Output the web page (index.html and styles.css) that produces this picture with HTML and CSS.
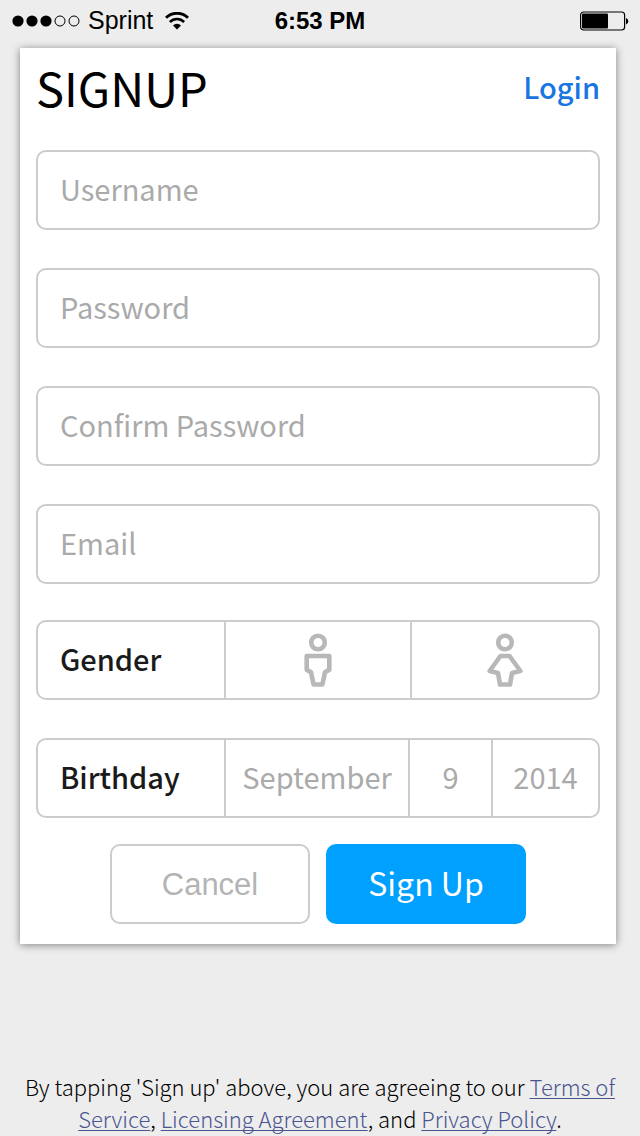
FILE: index.html
```html
<!DOCTYPE html>
<html lang="en">
<head>
  <meta charset="UTF-8">
  <meta name="viewport" content="width=device-width, initial-scale=1.0">
  <title>Signup</title>
  <link rel="stylesheet" href="styles.css">
</head>
<body>

<!-- Status bar -->
<div class="status-bar">
  <div class="carrier">
    <svg class="signal" width="68" height="12" viewBox="0 0 68 12">
      <circle cx="6" cy="6" r="5.6"/>
      <circle cx="20" cy="6" r="5.6"/>
      <circle cx="34" cy="6" r="5.6"/>
      <circle cx="48" cy="6" r="5" fill="none" stroke="#000"/>
      <circle cx="62" cy="6" r="5" fill="none" stroke="#000"/>
    </svg>
    <span>Sprint</span>
    <svg class="wifi" width="24" height="18" viewBox="0 0 24 18">
      <path d="M1 5.8a15.6 15.6 0 0 1 22 0" fill="none" stroke="#000" stroke-width="2.8"/>
      <path d="M4.9 10a10 10 0 0 1 14.2 0" fill="none" stroke="#000" stroke-width="2.6"/>
      <path d="M8 13.4a5.6 5.6 0 0 1 8 0L12 17.6z"/>
    </svg>
  </div>
  <div class="clock">6:53 PM</div>
  <svg class="battery" width="50" height="20" viewBox="0 0 50 20">
    <rect x="0.6" y="1" width="44" height="18" rx="3" fill="none" stroke="#000" stroke-width="1.2"/>
    <rect x="2" y="2.6" width="26" height="14.8" rx="1"/>
    <path d="M46 7a3 3.4 0 0 1 0 6.6z"/>
  </svg>
</div>

<form class="card">
  <div class="card-header">
    <h1>SIGNUP</h1>
    <a href="#login">Login</a>
  </div>

  <div class="fields">
    <input class="field" type="text" placeholder="Username" aria-label="Username">
    <input class="field" type="password" placeholder="Password" aria-label="Password">
    <input class="field" type="password" placeholder="Confirm Password" aria-label="Confirm Password">
    <input class="field" type="email" placeholder="Email" aria-label="Email">
  </div>

  <div class="options">
    <div class="row gender" role="radiogroup" aria-labelledby="genderLabel">
      <span class="row-label" id="genderLabel">Gender</span>
      <label class="cell">
        <input type="radio" name="gender" value="male" aria-label="Male">
        <svg width="36" height="54" viewBox="0 0 36 54">
          <circle cx="18" cy="9.5" r="6.8"/>
          <path d="M6.7 23h22.6v13.7l-4.3 2.6-2.6 12.2h-8.8L11 39.3l-4.3-2.6z"/>
        </svg>
      </label>
      <label class="cell">
        <input type="radio" name="gender" value="female" aria-label="Female">
        <svg width="36" height="54" viewBox="0 0 36 54">
          <circle cx="18" cy="9.5" r="6.8"/>
          <path d="M13.5 23h9L33.4 38l-8.4 2-2 11.5H13L11 40l-8.4-2z"/>
        </svg>
      </label>
    </div>

    <div class="row birthday" role="group" aria-labelledby="birthdayLabel">
      <span class="row-label" id="birthdayLabel">Birthday</span>
      <select class="cell" aria-label="Month"><option>September</option></select>
      <select class="cell" aria-label="Day"><option>9</option></select>
      <select class="cell" aria-label="Year"><option>2014</option></select>
    </div>
  </div>

  <div class="actions">
    <button class="btn btn-cancel" type="button">Cancel</button>
    <button class="btn btn-signup" type="submit">Sign Up</button>
  </div>
</form>

<p class="terms">
  By tapping 'Sign up' above, you are agreeing to our <a href="#terms">Terms of Service</a>, <a href="#license">Licensing Agreement</a>, and <a href="#privacy">Privacy Policy</a>.
</p>

</body>
</html>
```
FILE: styles.css
```css
* {
  box-sizing: border-box;
}
body {
  margin: 0;
  background: #ededed;
  font-family: "Noto Sans CJK SC", "Open Sans", sans-serif;
  font-size: 29px;
  color: #000;
}

/* status bar */
.status-bar {
  display: grid;
  grid-template-columns: 1fr auto 1fr;
  align-items: center;
  height: 41px;
  padding: 0 12px;
  font-family: "Liberation Sans", Arial, sans-serif;
  font-size: 25px;
}
.carrier {
  display: flex;
  align-items: center;
  gap: 8px;
}
.wifi {
  margin-left: 4px;
}
.clock {
  font-size: 24px;
  font-weight: bold;
}
.battery {
  justify-self: end;
  margin-right: -2px;
}

/* signup card */
.card {
  margin: 7px 24px 0 20px;
  padding: 0 16px 20px;
  background: #fff;
  box-shadow: 0 1px 8px rgba(0,0,0,0.45);
}
.card-header {
  display: flex;
  justify-content: space-between;
  align-items: center;
  height: 76px;
  margin-bottom: 26px;
}
h1 {
  margin: 0;
  font-size: 47px;
  font-weight: 400;
  line-height: 1;
}
.card-header a {
  font-weight: 500;
  color: #1976e0;
  text-decoration: none;
}
.fields, .options {
  display: flex;
  flex-direction: column;
  gap: 38px;
}
.field {
  width: 100%;
  height: 80px;
  padding: 0 22px 4px;
  border: 2px solid #ccc;
  border-radius: 10px;
  background: #fff;
  font: inherit;
  outline: none;
}
.field::placeholder {
  color: #aaa;
  opacity: 1;
}
.options {
  margin-top: 36px;
}
.row {
  display: grid;
  height: 80px;
  border: 2px solid #ccc;
  border-radius: 10px;
}
.gender {
  grid-template-columns: 186px 186fr 188fr;
}
.birthday {
  grid-template-columns: 186px 184fr 83fr 107fr;
}
.row-label {
  display: flex;
  align-items: center;
  padding: 0 0 4px 22px;
  font-weight: 500;
  color: #1a1a1a;
}
.cell {
  display: flex;
  align-items: center;
  justify-content: center;
  min-width: 0;
  border: 0;
  border-left: 2px solid #ccc;
}
.cell input {
  position: absolute;
  opacity: 0;
}
.cell svg {
  fill: none;
  stroke: #b8b8b8;
  stroke-width: 4.6;
  stroke-linejoin: round;
}
.cell input:checked + svg {
  stroke: #00a0ff;
}
select.cell {
  appearance: none;
  padding: 0 0 4px;
  background: none;
  font: inherit;
  color: #aaa;
  text-align: center;
  text-align-last: center;
}

/* buttons */
.actions {
  display: flex;
  justify-content: center;
  gap: 16px;
  margin-top: 26px;
}
.btn {
  width: 200px;
  height: 80px;
  border-radius: 10px;
  cursor: pointer;
}
.btn-cancel {
  padding: 2px 0 0;
  border: 2px solid #ccc;
  background: #fff;
  font-family: "Liberation Sans", Arial, sans-serif;
  font-size: 31px;
  color: #b4b4b4;
}
.btn-signup {
  padding: 0 0 4px;
  border: 0;
  background: #00a0ff;
  font-family: inherit;
  font-size: 32px;
  color: #fff;
}

.terms {
  margin: 126px 20px 0;
  font-size: 22px;
  font-weight: 300;
  line-height: 32px;
  text-align: center;
}
.terms a {
  color: #4a5590;
  text-decoration-thickness: 1px;
  text-underline-offset: 2px;
  text-decoration-skip-ink: none;
}
```
